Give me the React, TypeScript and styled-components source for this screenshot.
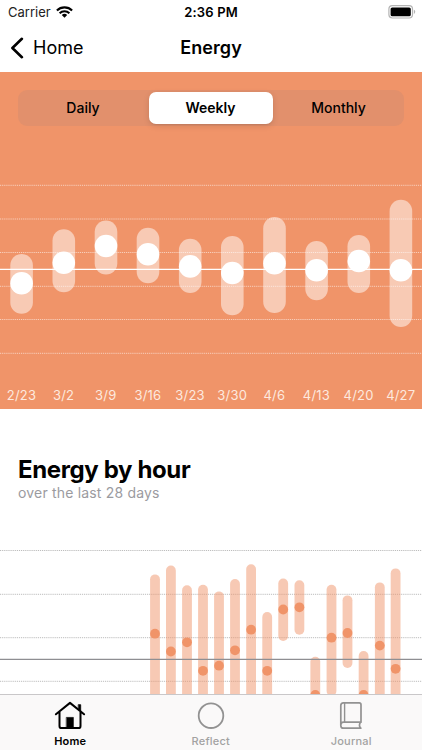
import React from 'react';
import styled, { createGlobalStyle } from 'styled-components';

const GlobalStyle = createGlobalStyle`
  *, *::before, *::after { box-sizing: border-box; }
  body { margin: 0; background: #fff; }
`;

const coral = '#f09469';

const Screen = styled.div`
  width: 422px;
  height: 750px;
  display: flex;
  flex-direction: column;
  overflow: hidden;
  background: #fff;
  color: #000;
  font-family: Inter, 'Liberation Sans', sans-serif;
`;

const StatusBar = styled.header`
  height: 24px;
  flex: none;
  display: grid;
  grid-template-columns: 1fr auto 1fr;
  align-items: center;
  padding: 0 6px 0 6px;
`;

const Carrier = styled.div`
  display: flex;
  align-items: center;
  gap: 5px;
  padding-left: 2px;
  font-size: 13px;
  line-height: 24px;
  color: #222;
  svg { display: block; }
`;

const Clock = styled.div`
  font-size: 13px;
  font-weight: 600;
  letter-spacing: 0.18px;
`;

const BatterySlot = styled.div`
  display: flex;
  justify-content: flex-end;
  padding-bottom: 1px;
  svg { display: block; }
`;

const NavBar = styled.nav`
  height: 48px;
  flex: none;
  display: grid;
  grid-template-columns: 1fr auto 1fr;
  align-items: center;
  padding: 0 10px;
`;

const BackButton = styled.button`
  display: flex;
  align-items: center;
  gap: 9px;
  padding: 0;
  border: 0;
  background: none;
  color: #000;
  font: inherit;
  font-size: 18px;
  line-height: 24px;
  svg { display: block; }
`;

const NavTitle = styled.h1`
  margin: 0;
  font-size: 18px;
  line-height: 24px;
  font-weight: 600;
  letter-spacing: 0.08px;
`;

const WeeklyPanel = styled.section`
  height: 337px;
  flex: none;
  display: flex;
  flex-direction: column;
  background: ${coral};
`;

const Segments = styled.div`
  height: 36px;
  margin: 18px 18px 0;
  padding: 2px;
  flex: none;
  display: grid;
  grid-template-columns: 126px 124px 1fr;
  gap: 0 2.5px;
  border-radius: 9px;
  background: #e2906c;
`;

const Segment = styled.button<{ $selected?: boolean }>`
  border: 0;
  padding: 0 0 1px;
  border-radius: 7px;
  background: ${(p) => (p.$selected ? '#fff' : 'transparent')};
  box-shadow: ${(p) => (p.$selected ? '0 2px 6px rgba(0,0,0,.12), 0 1px 1px rgba(0,0,0,.06)' : 'none')};
  font: inherit;
  font-size: 14px;
  font-weight: ${(p) => (p.$selected ? 600 : 500)};
  color: #000;
`;

const WeeklyPlot = styled.svg`
  display: block;
  width: 422px;
  height: 256px;
  flex: none;
`;

const DateAxis = styled.div`
  display: grid;
  grid-template-columns: repeat(10, 42.15px);
  height: 27px;
  align-items: center;
  text-align: center;
  font-size: 13px;
  line-height: 16px;
  letter-spacing: 0.2px;
  color: #fde9df;
  padding: 0 0 1px 0.4px;
`;

const HourSection = styled.section`
  height: 285px;
  flex: none;
  overflow: hidden;
  padding-top: 46px;
`;

const HourTitle = styled.h2`
  margin: 0 18px;
  font-size: 24px;
  line-height: 29px;
  font-weight: 700;
  letter-spacing: -0.37px;
`;

const HourCaption = styled.p`
  margin: 0 18px;
  padding-bottom: 1px;
  font-size: 14px;
  line-height: 18px;
  letter-spacing: 0.18px;
  color: #9b9b9f;
`;

const HourPlot = styled.svg`
  display: block;
  width: 422px;
  height: 192px;
`;

const TabBar = styled.nav`
  flex: 1;
  display: grid;
  grid-template-columns: repeat(3, 140.5px);
  border-top: 1px solid #c9c7c9;
  background: #faf9f9;
`;

const Tab = styled.button<{ $active?: boolean }>`
  display: flex;
  flex-direction: column;
  align-items: center;
  gap: 4px;
  padding: 5px 0 0;
  border: 0;
  background: none;
  color: ${(p) => (p.$active ? '#000' : '#929292')};
  svg { display: block; }
`;

const TabLabel = styled.span<{ $active?: boolean }>`
  font: ${(p) => (p.$active ? 600 : 500)} 11px/14px Inter, 'Liberation Sans', sans-serif;
  letter-spacing: 0.2px;
  color: ${(p) => (p.$active ? '#000' : '#a2a2a2')};
`;

type Range = { x: number; top: number; bottom: number; dot: number };

const weeks: (Range & { label: string })[] = [
  { label: '2/23', x: 21.6, top: 254, bottom: 313.7, dot: 283.3 },
  { label: '3/2', x: 63.8, top: 229.2, bottom: 292.3, dot: 262.7 },
  { label: '3/9', x: 106, top: 220.4, bottom: 274.5, dot: 246 },
  { label: '3/16', x: 148, top: 227.7, bottom: 283.3, dot: 254.2 },
  { label: '3/23', x: 190.2, top: 238.8, bottom: 293, dot: 266.4 },
  { label: '3/30', x: 232.3, top: 235.9, bottom: 315.2, dot: 273 },
  { label: '4/6', x: 274.5, top: 217, bottom: 313, dot: 263.2 },
  { label: '4/13', x: 316.6, top: 241, bottom: 300.3, dot: 270.3 },
  { label: '4/20', x: 358.8, top: 235, bottom: 293, dot: 261 },
  { label: '4/27', x: 400.9, top: 199.7, bottom: 327, dot: 270.3 },
];

const hours: Range[] = [
  { x: 155, top: 574.4, bottom: 720, dot: 633.7 },
  { x: 170.9, top: 565.5, bottom: 720, dot: 651.5 },
  { x: 187, top: 585.2, bottom: 720, dot: 642.3 },
  { x: 203, top: 584.7, bottom: 720, dot: 670.8 },
  { x: 219, top: 591.4, bottom: 720, dot: 665.7 },
  { x: 235, top: 579, bottom: 720, dot: 650.3 },
  { x: 251.1, top: 564.2, bottom: 720, dot: 629.7 },
  { x: 267.2, top: 612, bottom: 720, dot: 670.8 },
  { x: 283.2, top: 578.5, bottom: 641, dot: 609.5 },
  { x: 299.4, top: 580.2, bottom: 634.7, dot: 607.3 },
  { x: 315.3, top: 656.7, bottom: 720, dot: 695 },
  { x: 331.5, top: 584.7, bottom: 696, dot: 637.7 },
  { x: 347.5, top: 595.4, bottom: 668, dot: 633 },
  { x: 363.6, top: 651, bottom: 720, dot: 695 },
  { x: 379.8, top: 582.4, bottom: 720, dot: 645.6 },
  { x: 395.6, top: 568.4, bottom: 720, dot: 668.8 },
];

const weeklyGrid = [185.3, 219, 252.5, 286.3, 319.5, 353.3];
const hourlyGrid = [550.5, 594.3, 637.7, 681.3];

function RangeBars({ data, width, bar, dot }: { data: Range[]; width: number; bar: string; dot: string }) {
  return (
    <>
      {data.map((d) => (
        <g key={d.x}>
          <rect x={d.x - width / 2} y={d.top} width={width} height={d.bottom - d.top} rx={width / 2} fill={bar} />
          <circle cx={d.x} cy={d.dot} r={width / 2} fill={dot} />
        </g>
      ))}
    </>
  );
}

const WifiIcon = () => (
  <svg width="17" height="12" viewBox="0 0 17 12" fill="none" stroke="#000" strokeWidth="2.1">
    <path d="M.9 4.5a10.8 10.8 0 0 1 15.2 0M3.6 7.2a7 7 0 0 1 9.8 0" />
    <path d="M8.5 11.8 5.8 9.1a3.9 3.9 0 0 1 5.4 0Z" fill="#000" stroke="none" />
  </svg>
);

const BatteryIcon = () => (
  <svg width="28" height="14" viewBox="0 0 28 14">
    <rect x=".9" y=".7" width="23.6" height="12.3" rx="3.4" fill="#fff" stroke="#b4b4b4" strokeWidth="1.2" />
    <rect x="2.6" y="2.4" width="20.2" height="8.9" rx="1.6" fill="#000" />
    <path d="M25.9 4.8c1.8.6 1.8 3.5 0 4.1Z" fill="#b4b4b4" />
  </svg>
);

const ChevronIcon = () => (
  <svg width="14" height="22" viewBox="0 0 14 22" fill="none" stroke="#000" strokeWidth="2.6" strokeLinecap="round" strokeLinejoin="round">
    <path d="M11.9 1.8 2.4 11l9.5 9.2" />
  </svg>
);

const HouseIcon = () => (
  <svg width="32" height="30" viewBox="0 0 32 30" fill="none" stroke="currentColor" strokeWidth="2" strokeLinecap="round" strokeLinejoin="round">
    <path d="M1.9 14.3 16 2.9l14.1 11.4M5.5 12.1v13.8c0 1.5.8 2.2 2.2 2.2h16.6c1.4 0 2.2-.7 2.2-2.2V12.1" />
    <path d="M24.6 4.7h2.1v6.8l-2.1-1.8Z" fill="currentColor" strokeWidth=".8" />
    <path d="M12.6 17.4h6.8v10h-6.8Z" fill="currentColor" strokeWidth=".6" />
  </svg>
);

const CircleIcon = () => (
  <svg width="32" height="30" viewBox="0 0 32 30" fill="none" stroke="currentColor" strokeWidth="1.8">
    <circle cx="16" cy="15.7" r="12.3" />
  </svg>
);

const BookIcon = () => (
  <svg width="32" height="30" viewBox="0 0 32 30" fill="none" stroke="currentColor" strokeWidth="1.7" strokeLinecap="round" strokeLinejoin="round">
    <path d="M26 22.2V4.7c0-1.1-.6-1.8-1.8-1.8H8.3C6.7 2.9 5.8 3.8 5.8 5.4v20c0 1.8.9 2.8 2.7 2.8h17.3c-1.8-1.7-1.8-4.3 0-6H8.5c-1.7 0-2.7 1-2.7 2.7" />
    <path d="M9.6 3v19" strokeWidth="1.4" />
  </svg>
);

export default function App() {
  return (
    <Screen>
      <GlobalStyle />
      <StatusBar>
        <Carrier>Carrier <WifiIcon /></Carrier>
        <Clock>2:36 PM</Clock>
        <BatterySlot><BatteryIcon /></BatterySlot>
      </StatusBar>
      <NavBar>
        <BackButton><ChevronIcon />Home</BackButton>
        <NavTitle>Energy</NavTitle>
      </NavBar>
      <WeeklyPanel>
        <Segments>
          <Segment>Daily</Segment>
          <Segment $selected>Weekly</Segment>
          <Segment>Monthly</Segment>
        </Segments>
        <WeeklyPlot viewBox="0 126 422 256">
          {weeklyGrid.map((y) => (
            <line key={y} x1="0" x2="422" y1={y} y2={y} stroke="#fff" strokeOpacity=".55" strokeDasharray="1.2 .9" />
          ))}
          <line x1="0" x2="422" y1="269.4" y2="269.4" stroke="#fff" strokeWidth="1.4" />
          <RangeBars data={weeks} width={22.6} bar="rgba(255,255,255,.5)" dot="#fff" />
        </WeeklyPlot>
        <DateAxis>
          {weeks.map((w) => <span key={w.label}>{w.label}</span>)}
        </DateAxis>
      </WeeklyPanel>
      <HourSection>
        <HourTitle>Energy by hour</HourTitle>
        <HourCaption>over the last 28 days</HourCaption>
        <HourPlot viewBox="0 503 422 192">
          {hourlyGrid.map((y) => (
            <line key={y} x1="0" x2="422" y1={y} y2={y} stroke="#bdbdbd" strokeDasharray="1.2 .9" />
          ))}
          <RangeBars data={hours} width={9.8} bar="rgba(240,148,105,.5)" dot={coral} />
          <line x1="0" x2="422" y1="659.4" y2="659.4" stroke="#8e8e92" strokeWidth="1.1" />
        </HourPlot>
      </HourSection>
      <TabBar>
        <Tab $active><HouseIcon /><TabLabel $active>Home</TabLabel></Tab>
        <Tab><CircleIcon /><TabLabel>Reflect</TabLabel></Tab>
        <Tab><BookIcon /><TabLabel>Journal</TabLabel></Tab>
      </TabBar>
    </Screen>
  );
}
